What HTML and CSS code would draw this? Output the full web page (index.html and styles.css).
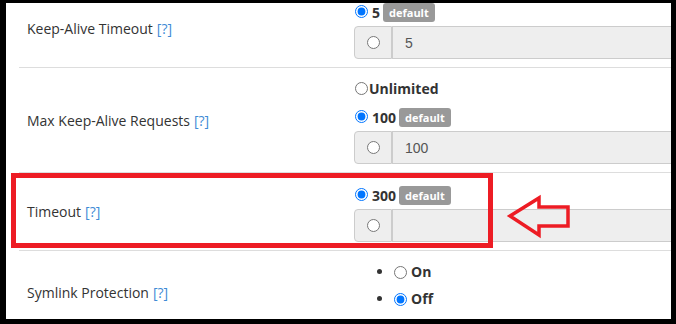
FILE: index.html
```html
<!DOCTYPE html>
<html>
<head>
<meta charset="utf-8">
<link rel="stylesheet" href="styles.css">
</head>
<body>
<div class="frame">
  <div class="table">
    <div class="row r1">
      <div class="label">Keep-Alive Timeout <a class="help">[?]</a></div>
      <div class="value">
        <div class="opt"><input type="radio" name="ka" checked><b>5</b><span class="badge">default</span></div>
        <div class="igroup"><span class="addon"><input type="radio" name="ka"></span><span class="inp">5</span></div>
      </div>
    </div>
    <div class="row r2">
      <div class="label">Max Keep-Alive Requests <a class="help">[?]</a></div>
      <div class="value">
        <div class="opt unl"><input type="radio" name="mk" class="tight"><b>Unlimited</b></div>
        <div class="opt"><input type="radio" name="mk" checked><b>100</b><span class="badge">default</span></div>
        <div class="igroup"><span class="addon"><input type="radio" name="mk"></span><span class="inp">100</span></div>
      </div>
    </div>
    <div class="row r3">
      <div class="label">Timeout <a class="help">[?]</a></div>
      <div class="value">
        <div class="opt"><input type="radio" name="to" checked><b>300</b><span class="badge">default</span></div>
        <div class="igroup"><span class="addon"><input type="radio" name="to"></span><span class="inp"></span></div>
      </div>
    </div>
    <div class="row r4">
      <div class="label">Symlink Protection <a class="help">[?]</a></div>
      <div class="value">
        <ul class="list">
          <li><input type="radio" name="sp"><b>On</b></li>
          <li><input type="radio" name="sp" checked><b>Off</b></li>
        </ul>
      </div>
    </div>
  </div>
  <div class="highlight"></div>
  <svg class="arrow" width="70" height="50" viewBox="0 0 70 50">
    <polygon points="5,23 34,5 34,14 63,14 63,33 34,33 34,42" fill="none" stroke="#ed1c24" stroke-width="3.5" stroke-linejoin="miter"/>
  </svg>
</div>
</body>
</html>
```
FILE: styles.css
```css
html, body {
  margin: 0;
  padding: 0;
  background: #000;
}
body {
  width: 676px;
  height: 324px;
  overflow: hidden;
  font-family: "Open Sans", "Liberation Sans", sans-serif;
  font-size: 14px;
  color: #333;
}
.frame {
  position: relative;
  margin: 3px 5px 0 6px;
  height: 316px;
  background: #fff;
  overflow: hidden;
}
.table {
  margin-top: -13px;
  margin-left: 13px;
}
.row {
  display: grid;
  grid-template-columns: 335px 1fr;
  border-bottom: 1px solid #ddd;
}
.label {
  display: flex;
  align-items: center;
  padding-left: 8px;
}
.help {
  color: #3f8bd6;
  margin-left: 4px;
}
.value {
  padding: 12px 0 8px;
}
.r4 .value {
  padding-top: 11px;
}
.opt {
  display: flex;
  align-items: center;
  height: 20px;
}
.opt.unl {
  height: 16px;
  margin-bottom: 11px;
}
.opt input {
  width: 13px;
  height: 13px;
  margin: 0 4px 2px 1px;
}
.opt input.tight {
  margin: 0 1px 0 1px;
}
b {
  font-weight: 700;
}
.badge {
  display: inline-block;
  margin-left: 3px;
  height: 19px;
  line-height: 19px;
  padding: 0 6px;
  background: #999;
  color: #fff;
  font-size: 11px;
  font-weight: 700;
  border-radius: 3px;
}
.igroup {
  display: flex;
  width: 400px;
  height: 33px;
  margin-top: 4px;
}
.addon {
  width: 36px;
  display: flex;
  align-items: center;
  justify-content: center;
  background: #eee;
  border: 1px solid #ccc;
  border-radius: 4px 0 0 4px;
}
.addon input {
  width: 13px;
  height: 13px;
  margin: 0;
}
.inp {
  flex: 1;
  display: flex;
  align-items: center;
  padding-left: 12px;
  background: #eee;
  border: 1px solid #ccc;
  border-left: 1px solid #ccc;
  font-family: "Liberation Sans", Arial, sans-serif;
  font-size: 14px;
  color: #555;
}
.list {
  margin: 0 0 20px;
  padding-left: 40px;
}
.list li {
  height: 16px;
  list-style: disc;
  display: list-item;
}
.list li + li {
  margin-top: 11px;
}
.list li input {
  width: 13px;
  height: 13px;
  margin: 0 4px 0 0;
  vertical-align: -2px;
}
.highlight {
  position: absolute;
  left: 5px;
  top: 170px;
  width: 482px;
  height: 75px;
  box-sizing: border-box;
  border: 5px solid #ed1c24;
}
.arrow {
  position: absolute;
  left: 499px;
  top: 190px;
}
```
